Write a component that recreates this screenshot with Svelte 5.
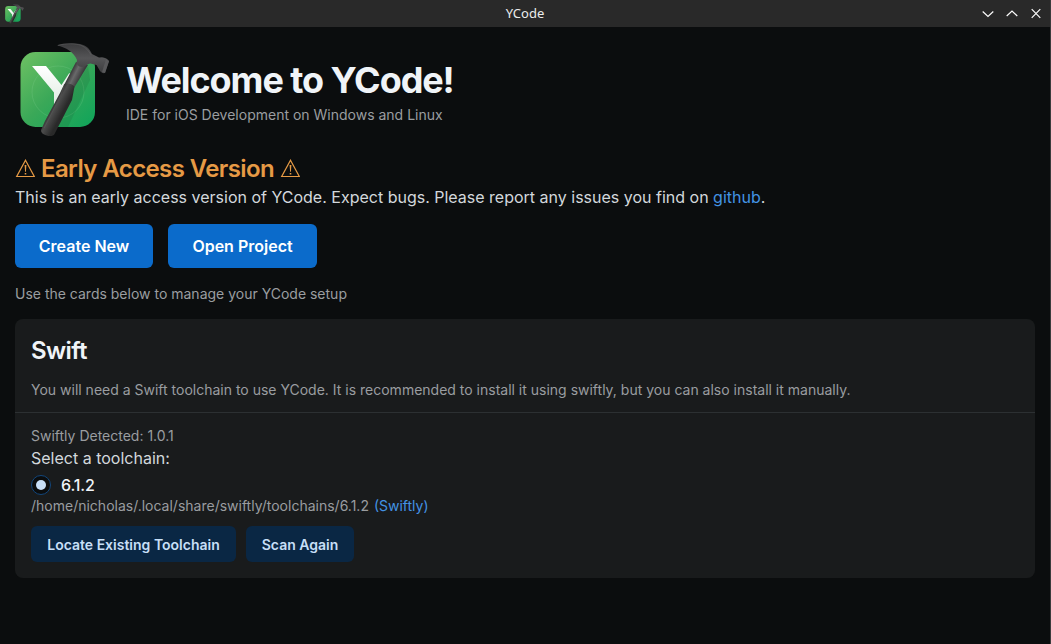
<script>
  const version = '6.1.2';
</script>

{#snippet logo(size)}
  <svg class="logo" width={size} height={size} viewBox="0 0 96 96" aria-hidden="true">
    <defs>
      <linearGradient id="tile{size}" x1="0" y1="0" x2="1" y2="1">
        <stop offset="0" stop-color="#6fc163" />
        <stop offset=".5" stop-color="#3aa858" />
        <stop offset="1" stop-color="#0ea45a" />
      </linearGradient>
      <linearGradient id="grip{size}" gradientUnits="userSpaceOnUse" x1="37" y1="64" x2="48" y2="70">
        <stop offset="0" stop-color="#303030" />
        <stop offset=".3" stop-color="#4c4c4c" />
        <stop offset="1" stop-color="#292929" />
      </linearGradient>
      <linearGradient id="shaft{size}" gradientUnits="userSpaceOnUse" x1="55" y1="32" x2="65" y2="37">
        <stop offset="0" stop-color="#3b3b3c" />
        <stop offset=".4" stop-color="#69696a" />
        <stop offset="1" stop-color="#39393a" />
      </linearGradient>
      <linearGradient id="steel{size}" x1="0" y1="0" x2="0" y2="1">
        <stop offset="0" stop-color="#39393b" />
        <stop offset=".5" stop-color="#555557" />
        <stop offset="1" stop-color="#3c3c3e" />
      </linearGradient>
      <linearGradient id="letter{size}" x1="0" y1="0" x2="0" y2="1">
        <stop offset="0" stop-color="#ffffff" />
        <stop offset="1" stop-color="#dce9df" />
      </linearGradient>
    </defs>
    <rect x="5.500" y="10" width="74.500" height="75" rx="15" fill="url(#tile{size})" />
    <circle cx="43" cy="50" r="26" fill="none" stroke="#8bd49a" stroke-opacity=".35" stroke-width=".6" />
    <path d="M17 24H31L46.500 43 54 31.500 60 30 50 56 39 66V50.500Z" fill="url(#letter{size})" />
    <path d="M73 24 60 44 40 85H53L75 38Z" fill="#103c24" opacity=".12" />
    <path d="M61 20 49 43l10 3 14-23Z" fill="url(#shaft{size})" />
    <path d="M49 42.500c3-2 8-.5 10.500 2L57 58 39.500 92c-2 4.500-14.500 1-13.500-4l4-9 15-28Z" fill="url(#grip{size})" />
    <path d="M49 44 45.500 54 29 86" fill="none" stroke="#777" stroke-opacity=".3" stroke-width=".8" />
    <path d="M42 3.500C47 1 58 .5 65 2c7 2 9 4 12 10l7 3.500 3-.3c3 .3 6 1.800 7 4L90 31c-2 .5-4-.5-5-2l-3.500-6-6-1.500C72 22 70 25 67 25c-4 0-6-3-5-7C59 10 51 5.500 42 3.500Z" fill="url(#steel{size})" />
    <path d="m91 17 3 2-4 12-3-.800Z" fill="#59595b" />
    <path d="M43 3.300c8-2 17-2 23 0 5 2 8 6 10 9.500" fill="none" stroke="#777" stroke-opacity=".4" stroke-width=".8" />
  </svg>
{/snippet}

{#snippet warning()}
  <svg class="warning" width="20" height="20" viewBox="0 0 20 20" aria-label="Warning">
    <path d="M10.500 1.200 19.300 17.500H1.700Z" fill="none" stroke="currentColor" stroke-width="1.200" />
    <path d="M9.600 6h1.800l-.5 6.700h-.8ZM9.700 14h1.600v1.600H9.700Z" fill="currentColor" />
  </svg>
{/snippet}

<div class="window">
  <header class="titlebar">
    <div class="app-icon">{@render logo(20)}</div>
    <span class="caption">YCode</span>
    <div class="controls">
      <svg width="12" height="12" viewBox="0 0 12 12"><path d="m.7 3.500 5.300 5 5.300-5" /></svg>
      <svg width="12" height="12" viewBox="0 0 12 12"><path d="m.7 8 5.300-5 5.300 5" /></svg>
      <svg width="12" height="12" viewBox="0 0 12 12"><path d="m1.700 1.200 8.600 8.600m0-8.600-8.600 8.600" /></svg>
    </div>
  </header>

  <main>
    <section class="intro">
      {@render logo(96)}
      <div class="intro-text">
        <h1>Welcome to YCode!</h1>
        <p class="small">IDE for iOS Development on Windows and Linux</p>
      </div>
    </section>

    <h2 class="early">{@render warning()}<span>Early Access Version</span>{@render warning()}</h2>
    <p class="notice">This is an early access version of YCode. Expect bugs. Please report any issues you find on <a href="#github">github</a>.</p>

    <div class="actions">
      <button class="solid create">Create New</button>
      <button class="solid open">Open Project</button>
    </div>

    <p class="small hint">Use the cards below to manage your YCode setup</p>

    <section class="card">
      <div class="card-head">
        <h3>Swift</h3>
        <p class="small">You will need a Swift toolchain to use YCode. It is recommended to install it using swiftly, but you can also install it manually.</p>
      </div>
      <div class="card-body">
        <p class="small">Swiftly Detected: 1.0.1</p>
        <p class="select">Select a toolchain:</p>
        <div class="option"><span class="radio"></span><span>{version}</span></div>
        <p class="small path">/home/nicholas/.local/share/swiftly/toolchains/{version} <span class="source">(Swiftly)</span></p>
        <div class="card-actions">
          <button class="soft locate">Locate Existing Toolchain</button>
          <button class="soft scan">Scan Again</button>
        </div>
      </div>
    </section>
  </main>
</div>

<style>
  :global(body) { margin: 0; background: #0b0d0e; }
  .window {
    box-sizing: border-box;
    width: 1051px;
    height: 644px;
    overflow: hidden;
    background: #0b0d0e;
    border-right: 1px solid #3a3c3d;
    color: #d3d8dc;
    font-family: Inter, sans-serif;
  }
  h1, h2, h3, p { margin: 0; }
  .titlebar {
    display: grid;
    grid-template-columns: 100px 1fr 100px;
    align-items: center;
    height: 27px;
    margin-right: -1px;
    background: #292929;
    color: #ececec;
  }
  .app-icon { display: flex; padding-left: 4px; }
  .caption { padding-right: 1px; font: 13px/27px "Noto Sans", sans-serif; text-align: center; }
  .controls { display: flex; justify-content: flex-end; gap: 12px; padding-right: 9px; }
  .controls path { fill: none; stroke: #fcfcfc; stroke-width: 1.2; }
  .logo { display: block; overflow: visible; }
  main { padding: 15px 15px 0; }
  .intro { display: flex; gap: 15px; height: 96px; }
  .intro-text { padding-top: 14px; }
  h1 { font-size: 36px; line-height: 48px; font-weight: 700; letter-spacing: -1.08px; color: #f0f4f8; white-space: nowrap; }
  .small { font-size: 14px; line-height: 21px; color: #9a9da0; white-space: nowrap; }
  .early {
    display: flex;
    align-items: center;
    gap: 6px;
    height: 32px;
    margin-top: 15px;
    color: #e69a45;
    font-size: 24px;
    font-weight: 600;
    letter-spacing: -0.6px;
    line-height: 32px;
  }
  .notice { font-size: 16px; line-height: 24px; white-space: nowrap; }
  a { color: #4393e4; text-decoration: none; }
  .actions { display: flex; gap: 15px; margin-top: 15px; }
  button { padding: 0; border: 0; font-family: inherit; font-weight: 600; white-space: nowrap; border-radius: 6px; }
  .solid { height: 44px; background: #0b6bcb; color: #fff; font-size: 16px; }
  .create { width: 138px; }
  .open { width: 149px; }
  .hint { margin-top: 15px; }
  .card { height: 259px; margin-top: 15px; border-radius: 8px; background: #191b1c; }
  .card-head { box-sizing: border-box; height: 94px; padding: 16px; border-bottom: 1px solid #2c3032; }
  h3 { margin-bottom: 12px; color: #f0f4f8; font-size: 24px; line-height: 32px; font-weight: 600; letter-spacing: -0.6px; }
  .card-body { padding: 12px 16px; }
  .select { font-size: 16px; line-height: 24px; }
  .option { display: flex; align-items: center; gap: 10px; height: 24px; margin-top: 3px; color: #f0f4f8; font-size: 16px; font-weight: 500; letter-spacing: -0.15px; }
  .radio { display: grid; box-sizing: border-box; width: 20px; height: 20px; place-items: center; border: 1px solid #12467b; border-radius: 50%; background: #0b0d0e; }
  .radio::after { width: 10px; height: 10px; border-radius: 50%; background: #c7dff7; content: ""; }
  .path { margin-top: -2px; }
  .source { margin-left: 1px; color: #4393e4; }
  .card-actions { display: flex; gap: 10px; margin-top: 10px; }
  .soft { height: 36px; background: #0a2744; color: #c7dff7; font-size: 14px; }
  .locate { width: 205px; }
  .scan { width: 108px; }
</style>
